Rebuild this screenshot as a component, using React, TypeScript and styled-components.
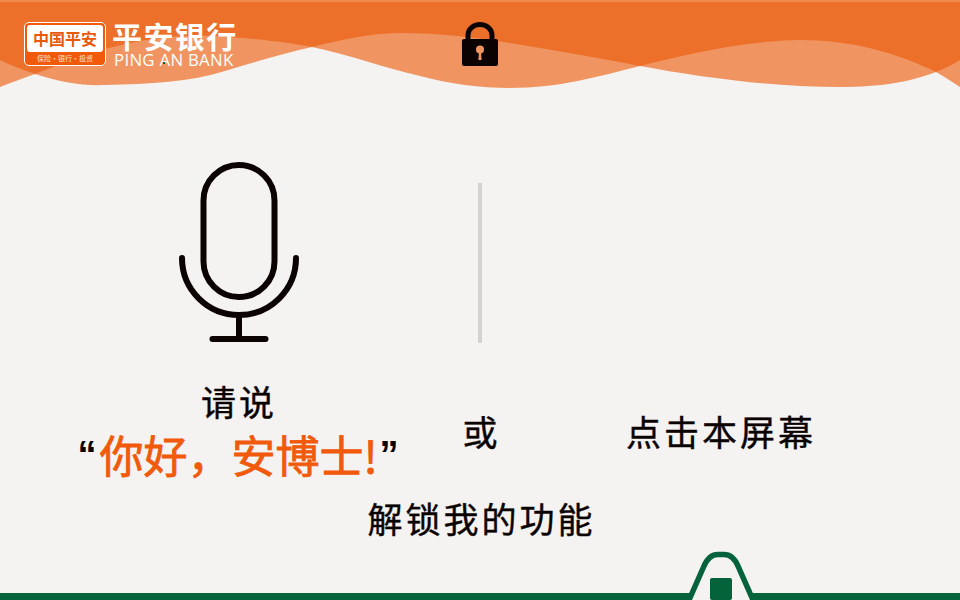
import styled, { createGlobalStyle } from "styled-components";

const GlobalStyle = createGlobalStyle`
  html, body {
    margin: 0;
    padding: 0;
    background: #f4f3f2;
  }
  body {
    font-family: "Noto Sans CJK SC", "Noto Sans", sans-serif;
    color: #0a0302;
  }
`;

const WAVE_A =
  "M0 60 C12 66 24 70 35 74 C60 82 82 86 105 85 C150 84 190 82 225 71 C255 62 285 53 312 47 C345 39 372 33 402 33 C450 33 500 41 540 48 C575 54 610 60 640 66 C700 77 770 87 840 87 C880 87 910 82 936 72 C945 68 952 65 960 60 L960 0 L0 0 Z";
const WAVE_B =
  "M0 87 C12 82 24 78 35 74 C65 62 100 48 140 41 C165 36 190 35 215 36 C250 38 285 42 312 47 C350 55 385 68 420 76 C450 84 480 88 510 88 C560 88 600 76 640 66 C690 53 745 41 800 40 C850 40 895 52 936 72 C945 77 952 82 960 87 L960 0 L0 0 Z";

const Wave = () => (
  <WaveSvg viewBox="0 0 960 90" width="960" height="90">
    <defs>
      <clipPath id="wave-b">
        <path d={WAVE_B} />
      </clipPath>
    </defs>
    <path d={WAVE_A} fill="#f09562" />
    <path d={WAVE_B} fill="#f09562" />
    <path d={WAVE_A} fill="#ed702a" clipPath="url(#wave-b)" />
    <rect x="0" y="0" width="960" height="2" fill="#ef8a50" />
  </WaveSvg>
);

const LockIcon = () => (
  <svg width="36" height="44" viewBox="0 0 36 44">
    <path d="M6 20 V13 a12 10.5 0 0 1 24 0 V20" fill="none" stroke="#0a0302" strokeWidth="5" />
    <rect x="0" y="17" width="36" height="27" rx="2" fill="#0a0302" />
    <circle cx="18" cy="27.5" r="4" fill="#f09562" />
    <path d="M17 29 h2 l0.6 9 h-3.2 Z" fill="#f09562" />
  </svg>
);

const MicIcon = () => (
  <svg width="130" height="190" viewBox="0 0 130 190" fill="none" stroke="#0a0302" strokeWidth="6" strokeLinecap="round">
    <rect x="29.5" y="10" width="71" height="132" rx="35.5" />
    <path d="M8 103 A57 57 0 0 0 122 103" />
    <path d="M65 160 V184" strokeLinecap="butt" />
    <path d="M38.5 184 H91.5" />
  </svg>
);

const FooterBump = () => (
  <svg width="70" height="50" viewBox="0 0 70 50">
    <path
      d="M3 50 L18 16 C21 9 26 4.5 32 4.5 H38 C44 4.5 49 9 52 16 L67 50"
      fill="none"
      stroke="#04633b"
      strokeWidth="5.5"
    />
    <rect x="0" y="43" width="4" height="7" fill="#04633b" />
    <rect x="66" y="43" width="4" height="7" fill="#04633b" />
    <rect x="24" y="28" width="22" height="22" rx="2" fill="#04633b" />
  </svg>
);

export default function App() {
  return (
    <Page>
      <GlobalStyle />
      <Header>
        <Wave />
        <Logo>
          <Badge>
            <BadgeTop>中国平安</BadgeTop>
            <BadgeBottom>保险·银行·投资</BadgeBottom>
          </Badge>
          <Brand>
            <BrandName>平安银行</BrandName>
            <BrandLatin>
              PING AN BANK
              <BrandDot />
            </BrandLatin>
          </Brand>
        </Logo>
        <LockSlot>
          <LockIcon />
        </LockSlot>
      </Header>
      <Main>
        <VoiceColumn>
          <MicIcon />
          <Prompt>请说</Prompt>
          <Greeting>
            <Quote $side="open">“</Quote>
            你好，安博士!
            <Quote $side="close">”</Quote>
          </Greeting>
        </VoiceColumn>
        <MiddleColumn>
          <Divider />
          <OrText>或</OrText>
        </MiddleColumn>
        <TouchColumn>
          <Prompt>点击本屏幕</Prompt>
        </TouchColumn>
      </Main>
      <Caption>解锁我的功能</Caption>
      <Footer>
        <Rail $width="686px" />
        <FooterBump />
        <Rail />
      </Footer>
    </Page>
  );
}

const Page = styled.div`
  width: 960px;
  height: 600px;
  display: flex;
  flex-direction: column;
  overflow: hidden;
  background: #f4f3f2;
`;

const Header = styled.header`
  position: relative;
  height: 92px;
  flex-shrink: 0;
  display: grid;
  grid-template-columns: 1fr 36px 1fr;
  padding-top: 22px;
  box-sizing: border-box;
`;

const WaveSvg = styled.svg`
  position: absolute;
  left: 0;
  top: 0;
`;

const Logo = styled.div`
  position: relative;
  display: flex;
  align-items: flex-start;
  gap: 6px;
  padding-left: 24px;
`;

const Badge = styled.div`
  width: 82px;
  height: 44px;
  box-sizing: border-box;
  border: 1px solid #fff;
  border-radius: 5px;
  background: #f05a0a;
  display: flex;
  flex-direction: column;
  padding: 2px 2px 0;
`;

const BadgeTop = styled.div`
  height: 27px;
  background: #fff;
  border-radius: 3px;
  color: #e8590c;
  font-size: 16px;
  font-weight: 700;
  line-height: 27px;
  text-align: center;
  white-space: nowrap;
`;

const BadgeBottom = styled.div`
  color: #fbe3d3;
  font-size: 7px;
  line-height: 12px;
  text-align: center;
  white-space: nowrap;
`;

const Brand = styled.div`
  display: flex;
  flex-direction: column;
  color: #fff;
`;

const BrandName = styled.div`
  height: 28px;
  font-size: 30px;
  font-weight: 700;
  line-height: 26px;
  letter-spacing: 1.4px;
  white-space: nowrap;
`;

const BrandLatin = styled.div`
  position: relative;
  font-family: "Open Sans", "Liberation Sans", sans-serif;
  font-size: 16.8px;
  line-height: 18px;
  margin-top: 1px;
  padding-left: 2px;
  letter-spacing: 0.3px;
  white-space: nowrap;
`;

const BrandDot = styled.span`
  position: absolute;
  left: 51px;
  top: 11px;
  width: 2px;
  height: 2px;
  background: #04633b;
`;

const LockSlot = styled.div`
  position: relative;
`;

const Main = styled.main`
  flex: 1;
  display: grid;
  grid-template-columns: 478px 4px 478px;
  padding-top: 63px;
`;

const VoiceColumn = styled.section`
  display: flex;
  flex-direction: column;
  align-items: center;
  svg {
    margin-bottom: 36px;
  }
`;

const Prompt = styled.div`
  font-size: 35px;
  font-weight: 400;
  -webkit-text-stroke: 0.4px #0a0302;
  line-height: 40px;
  letter-spacing: 3px;
  white-space: nowrap;
`;

const Greeting = styled.div`
  margin-top: 3px;
  padding-right: 2px;
  color: #f05a0a;
  font-size: 44px;
  font-weight: 400;
  -webkit-text-stroke: 0.8px #f05a0a;
  line-height: 60px;
  white-space: nowrap;
`;

const Quote = styled.span<{ $side: "open" | "close" }>`
  color: #0a0302;
  -webkit-text-stroke: 0;
  font-family: "Liberation Sans", sans-serif;
  font-size: 38px;
  font-weight: 700;
  line-height: 1;
  vertical-align: 5px;
  margin-left: ${(p) => (p.$side === "close" ? "2px" : "0")};
  margin-right: ${(p) => (p.$side === "open" ? "3px" : "0")};
`;

const MiddleColumn = styled.section`
  display: flex;
  flex-direction: column;
  align-items: center;
`;

const Divider = styled.div`
  width: 4px;
  height: 160px;
  flex-shrink: 0;
  margin-top: 28px;
  background: #d2d1cf;
`;

const OrText = styled.div`
  margin-top: 68px;
  font-size: 35px;
  font-weight: 400;
  -webkit-text-stroke: 0.4px #0a0302;
  line-height: 40px;
  white-space: nowrap;
`;

const TouchColumn = styled.section`
  display: flex;
  justify-content: center;
  padding-top: 256px;
`;

const Caption = styled.div`
  font-size: 35px;
  font-weight: 400;
  -webkit-text-stroke: 0.4px #0a0302;
  line-height: 40px;
  letter-spacing: 3px;
  text-align: center;
  margin-bottom: 12px;
  padding-left: 3px;
`;

const Footer = styled.footer`
  height: 50px;
  flex-shrink: 0;
  display: flex;
  align-items: flex-end;
  svg {
    display: block;
    flex-shrink: 0;
  }
`;

const Rail = styled.div<{ $width?: string }>`
  flex: ${(p) => (p.$width ? `0 0 ${p.$width}` : "1")};
  height: 7px;
  background: #04633b;
`;
